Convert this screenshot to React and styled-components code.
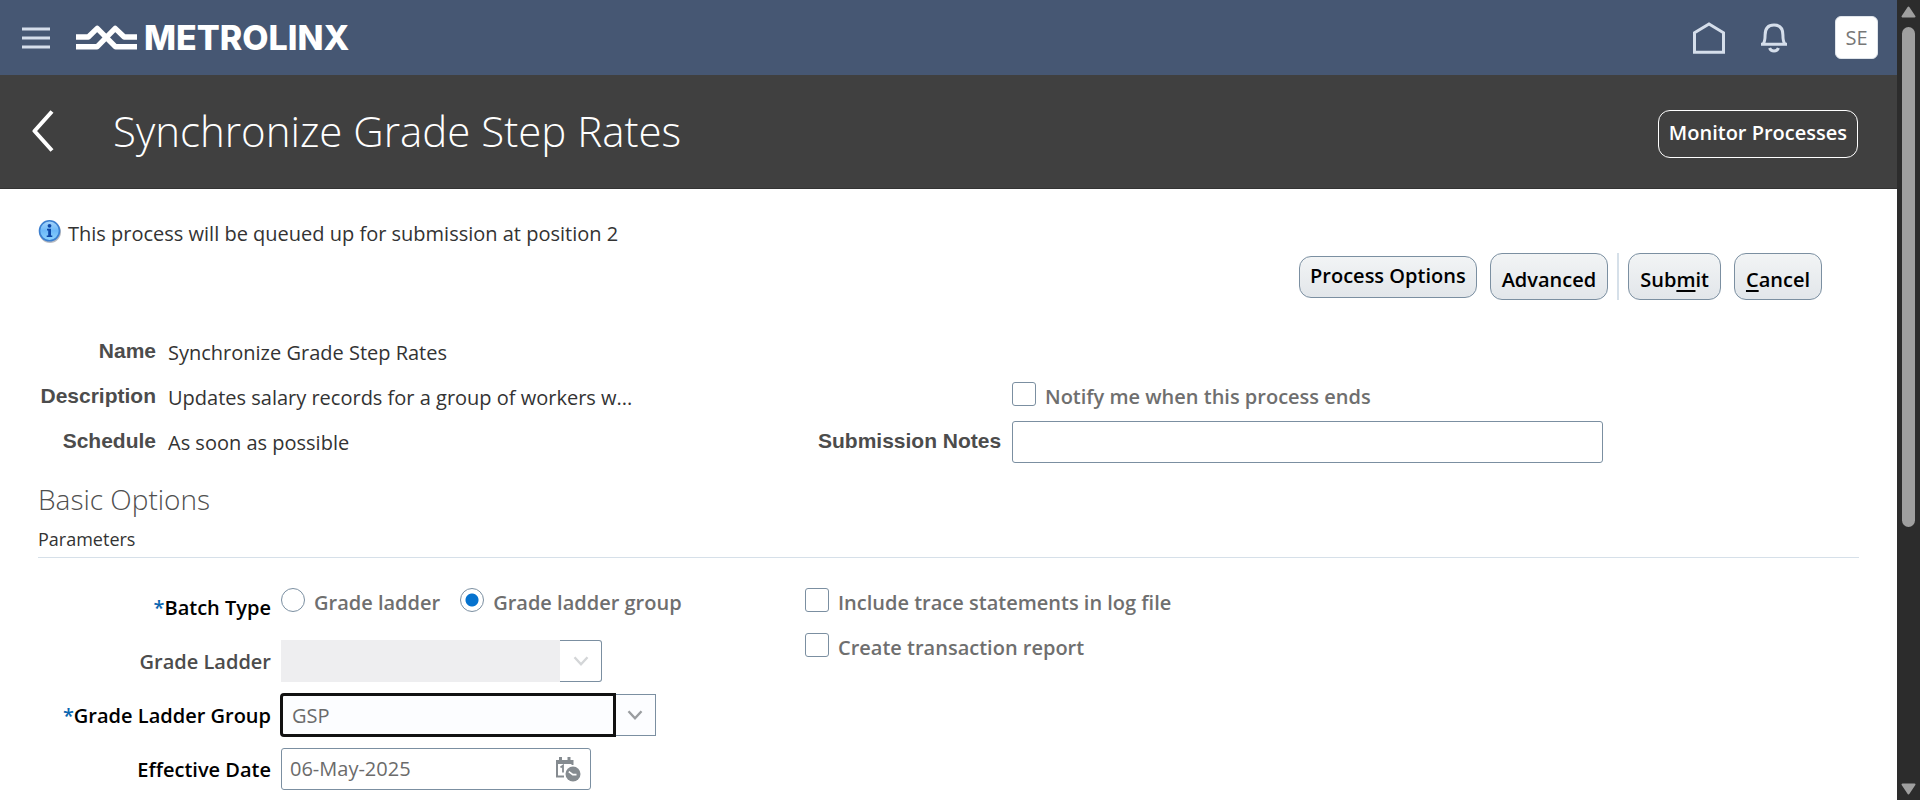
import React from "react";
import styled, { createGlobalStyle, css } from "styled-components";

const GlobalStyle = createGlobalStyle`
  *, *::before, *::after { box-sizing: border-box; }
  body {
    margin: 0;
    background: #fff;
    color: #333;
    font: 400 20px/28px "Open Sans", "Noto Sans", sans-serif;
  }
  button, input { font: inherit; }
`;

const Page = styled.div`
  display: flex;
  min-height: 100vh;
`;

const Content = styled.div`
  flex: 1;
  min-width: 0;
`;

/* Scroll rail */
const Rail = styled.div`
  position: sticky;
  top: 0;
  flex: none;
  display: flex;
  flex-direction: column;
  align-items: center;
  width: 23px;
  height: 100vh;
  padding: 6px 0 5px;
  background: #2c2c2c;
`;

const RailTrack = styled.div`
  flex: 1;
  width: 13px;
  margin: 9px 0;
`;

const RailThumb = styled.div`
  height: 67%;
  border-radius: 7px;
  background: #9f9f9f;
`;

/* Global header */
const GlobalBar = styled.header`
  display: flex;
  align-items: center;
  height: 75px;
  padding: 0 19px 0 22px;
  background: #465773;
`;

const IconButton = styled.button`
  display: flex;
  padding: 0;
  border: 0;
  background: none;
  cursor: pointer;
`;

const Brand = styled.a`
  display: flex;
  align-items: center;
  gap: 7px;
  margin-left: 26px;
  color: #fff;
  font-family: Inter, "Open Sans", sans-serif;
  font-size: 34px;
  font-weight: 800;
  line-height: 40px;
  text-decoration: none;
`;

const GlobalActions = styled.nav`
  display: flex;
  align-items: center;
  gap: 36px;
  margin-left: auto;
`;

const Avatar = styled.button`
  width: 43px;
  height: 43px;
  margin-left: 12px;
  padding: 0;
  border: 1px solid #dfe4ea;
  border-radius: 6px;
  background: #fff;
  color: #777;
`;

/* Page title */
const TitleBar = styled.div`
  display: flex;
  align-items: center;
  height: 114px;
  padding: 0 39px 2px 32px;
  border-bottom: 1px solid #333;
  background: #404040;
  color: #fff;
`;

const Title = styled.h1`
  flex: 1;
  margin: 0 0 0 59px;
  font-size: 42px;
  font-weight: 300;
  line-height: 60px;
`;

const OutlineButton = styled.button`
  height: 48px;
  margin-top: 6px;
  padding: 0 10px 2px;
  border: 1px solid #fff;
  border-radius: 12px;
  background: transparent;
  color: #fff;
  font-weight: 600;
`;

/* Body */
const Main = styled.main`
  padding: 31px 38px 7px;
`;

const Message = styled.div`
  display: flex;
  gap: 6px;
`;

const Toolbar = styled.div`
  display: flex;
  align-items: center;
  justify-content: flex-end;
  gap: 13px;
  margin-top: 5px;
  padding-right: 37px;
`;

const ActionGroup = styled.div`
  display: flex;
  gap: 13px;
  padding-left: 9px;
  border-left: 2px solid #d6e0e9;
  margin-left: -4px;
`;

const ActionButton = styled.button`
  height: ${(p) => (p.$compact ? 42 : 47)}px;
  padding: ${(p) => (p.$compact ? "0 10px 1px" : "7px 11px 0")};
  border: 1px solid #7b8fa1;
  border-radius: 12px;
  background: linear-gradient(#f2f4f5, #e2e6ea);
  color: #000;
  font-weight: 600;
  white-space: nowrap;
`;

const AccessKey = styled.span`
  text-decoration: underline;
  text-decoration-thickness: 2px;
  text-underline-offset: 3px;
`;

const Summary = styled.div`
  display: grid;
  grid-template-columns: 118px minmax(0, 638fr) 182px minmax(0, 847fr);
  grid-auto-rows: 45px;
  column-gap: 12px;
  margin-top: 29px;
`;

const SummaryLabel = styled.label`
  padding-top: 9px;
  color: #4c4c4c;
  font: 700 21px/26px "Liberation Sans", Arial, sans-serif;
  text-align: right;
  white-space: nowrap;
`;

const SummaryValue = styled.div`
  padding-top: 10px;
  white-space: nowrap;
`;

const NotifyCell = styled.div`
  grid-column: 4;
  padding-top: 8px;
`;

const boxed = css`
  height: 42px;
  border: 1px solid #7b8fa1;
  border-radius: 3px;
  background: #fff;
  color: #6b6b6b;
`;

const NotesInput = styled.input`
  ${boxed}
  align-self: center;
  width: 100%;
  max-width: 591px;
  padding: 0 9px;
`;

const SectionTitle = styled.h2`
  margin: 17px 0 8px;
  color: #4f4f4f;
  font-size: 28px;
  font-weight: 300;
  line-height: 36px;
`;

const SubTitle = styled.h3`
  margin: 0;
  padding-bottom: 4px;
  border-bottom: 1px solid #d6e0e9;
  font-size: 18px;
  font-weight: 400;
  line-height: 28px;
`;

const Form = styled.form`
  display: grid;
  grid-template-columns: minmax(0, 767fr) minmax(0, 1054fr);
  margin-top: 28px;
`;

const FieldGrid = styled.div`
  display: grid;
  grid-template-columns: 233px minmax(0, 1fr);
  grid-auto-rows: 42px;
  gap: 12px 10px;
`;

const FieldLabel = styled.label`
  align-self: center;
  padding-top: 2px;
  color: ${(p) => (p.$muted ? "#4c4c4c" : "#000")};
  font-weight: 600;
  text-align: right;
  white-space: nowrap;
`;

const Required = styled.span`
  color: #0a66b0;
`;

const RadioGroup = styled.div`
  display: flex;
  align-items: flex-start;
  gap: 20px;
  padding-top: 2px;
`;

const Choice = styled.label`
  display: flex;
  gap: 9px;
  color: #6f6f6f;
  font-weight: 600;
  line-height: 30px;
  white-space: nowrap;
`;

const tick = css`
  appearance: none;
  flex: none;
  width: 24px;
  height: 24px;
  margin: 0;
  border: 1px solid #7b8fa1;
  background: #fff;
`;

const CheckBox = styled.input.attrs({ type: "checkbox" })`
  ${tick}
  border-radius: 3px;
  &:checked { background: #0572ce; }
`;

const Radio = styled.input.attrs({ type: "radio" })`
  ${tick}
  border-radius: 50%;
  &:checked { background: radial-gradient(circle, #0572ce 6px, #fff 7px); }
`;

const CheckList = styled.div`
  display: flex;
  flex-direction: column;
  gap: 15px;
  padding-top: 2px;
`;

const Combo = styled.div`
  display: flex;
`;

const ComboInput = styled.input`
  ${boxed}
  width: ${(p) => p.$width}px;
  padding: 0 10px;
  border-radius: 3px 0 0 3px;
  &:disabled {
    border: 0;
    border-radius: 0;
    background: #eeeef0;
  }
  &:not(:disabled) {
    outline: 3px solid #111;
    outline-offset: -2px;
    background: #fcfdff;
    z-index: 1;
  }
`;

const ComboButton = styled.button`
  ${boxed}
  display: flex;
  align-items: center;
  justify-content: center;
  width: ${(p) => (p.disabled ? 42 : 41)}px;
  padding: 0;
  border-left: 0;
  border-radius: ${(p) => (p.disabled ? "0 3px 3px 0" : "0")};
  background: ${(p) => (p.disabled ? "#fff" : "#fcfdff")};
  color: ${(p) => (p.disabled ? "#d4d6d8" : "#9a9da0")};
`;

const DateBox = styled.div`
  ${boxed}
  display: flex;
  align-items: center;
  width: 310px;
  padding: 0 9px 0 8px;
`;

const DateInput = styled.input`
  flex: 1;
  min-width: 0;
  padding: 0;
  border: 0;
  outline: 0;
  background: none;
  color: inherit;
`;

const MenuIcon = () => (
  <svg width="28" height="22" viewBox="0 0 28 22" stroke="#d5deeb" strokeWidth="3" aria-hidden="true">
    <path d="M0 2H28M0 11H28M0 20H28" />
  </svg>
);

const LogoMark = () => (
  <svg width="61" height="26" viewBox="0 0 61 26" fill="none" stroke="#fff" strokeWidth="5.4" strokeLinejoin="round" aria-hidden="true">
    <path d="M0 12H12.300L21.200 3.400L39.600 21.800H61" />
    <path d="M0 21.800H21L39.200 3.400L48.200 12H61" />
  </svg>
);

const HomeIcon = () => (
  <svg width="32" height="32" viewBox="0 0 32 32" fill="none" stroke="#d5deeb" strokeWidth="3" aria-hidden="true">
    <path d="M1.5 10.8L16 1.9L30.5 10.8V30.2H1.5Z" />
  </svg>
);

const BellIcon = () => (
  <svg width="26" height="30" viewBox="0 0 26 30" fill="none" stroke="#d5deeb" strokeWidth="3" aria-hidden="true">
    <path d="M0 21.3H26M2 21C4 19 4.1 17 4.1 12C4.1 5.2 7.6 2 13 2C18.400 2 21.900 5.200 21.900 12C21.900 17 22 19 24 21" />
    <path d="M8.600 25C10 29 16 29 17.400 25" />
  </svg>
);

const BackIcon = () => (
  <svg width="22" height="42" viewBox="0 0 22 42" fill="none" stroke="#fff" strokeWidth="4" aria-hidden="true">
    <path d="M20 1.500L2.500 21L20 40.500" strokeLinejoin="round" />
  </svg>
);

const InfoIcon = () => (
  <svg width="24" height="24" viewBox="0 0 24 24" aria-hidden="true">
    <defs>
      <linearGradient id="infoFill" x1="0" y1="0" x2="0" y2="1">
        <stop offset="0" stopColor="#a9d6fb" />
        <stop offset="0.500" stopColor="#6cb8f8" />
        <stop offset="1" stopColor="#8fd6ff" />
      </linearGradient>
    </defs>
    <circle cx="12" cy="12" r="11" fill="#b9bcc2" />
    <circle cx="11.500" cy="10.800" r="10" fill="url(#infoFill)" stroke="#3b7fd0" strokeWidth="1.600" />
    <circle cx="11.500" cy="5.800" r="1.900" fill="#0d47a8" />
    <path d="M9 8.800H13V15.500H14.300V17H8.700V15.500H10.200V10.400H9Z" fill="#0d47a8" />
  </svg>
);

const ChevronIcon = () => (
  <svg width="16" height="10" viewBox="0 0 16 10" fill="none" stroke="currentColor" strokeWidth="2.400" aria-hidden="true">
    <path d="M1.500 1.200L8 8.200L14.500 1.200" />
  </svg>
);

const CalendarIcon = () => (
  <svg width="25" height="25" viewBox="0 0 25 25" aria-hidden="true">
    <path d="M3 0H6V3H11.500V0H14.500V3H17.500V8H15.500V7H2V18.500H8V20.500H0V3H3Z" fill="#858b90" />
    <path d="M4.500 10.500L7 8.600V15.500" fill="none" stroke="#858b90" strokeWidth="1.800" />
    <circle cx="17" cy="17" r="8.600" fill="#fff" />
    <circle cx="17" cy="17" r="7.500" fill="#858b90" />
    <path d="M12.800 14.600L16.800 17.700H20.500" fill="none" stroke="#fff" strokeWidth="1.700" />
  </svg>
);

const RailArrow = ({ down }) => (
  <svg width="15" height="12" viewBox="0 0 15 12" fill="#9f9f9f" stroke="#9f9f9f" strokeWidth="2" strokeLinejoin="round" aria-hidden="true">
    <path d={down ? "M1.500 1.500H13.500L7.500 10.500Z" : "M1.500 10.500H13.500L7.500 1.500Z"} />
  </svg>
);

const SUMMARY = [
  ["Name", "Synchronize Grade Step Rates"],
  ["Description", "Updates salary records for a group of workers w..."],
];

export default function App() {
  return (
    <>
      <GlobalStyle />
      <Page>
        <Content>
          <GlobalBar>
            <IconButton aria-label="Navigator"><MenuIcon /></IconButton>
            <Brand href="#"><LogoMark />METROLINX</Brand>
            <GlobalActions>
              <IconButton aria-label="Home"><HomeIcon /></IconButton>
              <IconButton aria-label="Notifications"><BellIcon /></IconButton>
              <Avatar>SE</Avatar>
            </GlobalActions>
          </GlobalBar>
          <TitleBar>
            <IconButton aria-label="Back"><BackIcon /></IconButton>
            <Title>Synchronize Grade Step Rates</Title>
            <OutlineButton>Monitor Processes</OutlineButton>
          </TitleBar>
          <Main>
            <Message role="status">
              <InfoIcon />
              This process will be queued up for submission at position 2
            </Message>
            <Toolbar>
              <ActionButton $compact>Process Options</ActionButton>
              <ActionButton>Advanced</ActionButton>
              <ActionGroup>
                <ActionButton>Sub<AccessKey>m</AccessKey>it</ActionButton>
                <ActionButton><AccessKey>C</AccessKey>ancel</ActionButton>
              </ActionGroup>
            </Toolbar>
            <Summary>
              {SUMMARY.map(([label, value]) => (
                <React.Fragment key={label}>
                  <SummaryLabel as="div">{label}</SummaryLabel>
                  <SummaryValue>{value}</SummaryValue>
                  {label === "Name" && <NotifyCell as="span" />}
                </React.Fragment>
              ))}
              <NotifyCell>
                <Choice><CheckBox />Notify me when this process ends</Choice>
              </NotifyCell>
              <SummaryLabel as="div">Schedule</SummaryLabel>
              <SummaryValue>As soon as possible</SummaryValue>
              <SummaryLabel htmlFor="notes">Submission Notes</SummaryLabel>
              <NotesInput id="notes" type="text" />
            </Summary>
            <SectionTitle>Basic Options</SectionTitle>
            <SubTitle>Parameters</SubTitle>
            <Form onSubmit={(e) => e.preventDefault()}>
              <FieldGrid>
                <FieldLabel as="span" id="batch"><Required>*</Required>Batch Type</FieldLabel>
                <RadioGroup role="radiogroup" aria-labelledby="batch">
                  <Choice><Radio name="batch" />Grade ladder</Choice>
                  <Choice><Radio name="batch" defaultChecked />Grade ladder group</Choice>
                </RadioGroup>
                <FieldLabel htmlFor="ladder" $muted>Grade Ladder</FieldLabel>
                <Combo>
                  <ComboInput id="ladder" type="text" $width={279} disabled />
                  <ComboButton type="button" aria-label="Search Grade Ladder" disabled><ChevronIcon /></ComboButton>
                </Combo>
                <FieldLabel htmlFor="group"><Required>*</Required>Grade Ladder Group</FieldLabel>
                <Combo>
                  <ComboInput id="group" type="text" $width={334} defaultValue="GSP" />
                  <ComboButton type="button" aria-label="Search Grade Ladder Group"><ChevronIcon /></ComboButton>
                </Combo>
                <FieldLabel htmlFor="date">Effective Date</FieldLabel>
                <DateBox>
                  <DateInput id="date" type="text" defaultValue="06-May-2025" />
                  <IconButton type="button" aria-label="Select date"><CalendarIcon /></IconButton>
                </DateBox>
              </FieldGrid>
              <CheckList>
                <Choice><CheckBox />Include trace statements in log file</Choice>
                <Choice><CheckBox />Create transaction report</Choice>
              </CheckList>
            </Form>
          </Main>
        </Content>
        <Rail aria-hidden="true">
          <RailArrow />
          <RailTrack><RailThumb /></RailTrack>
          <RailArrow down />
        </Rail>
      </Page>
    </>
  );
}
